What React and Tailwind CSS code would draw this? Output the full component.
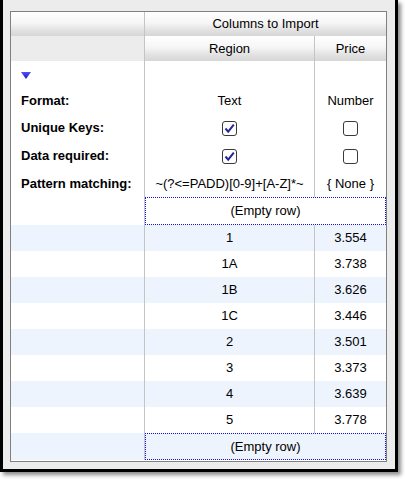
import React from "react";

const LINE = "border-[#c4c4c4]";
const HEAD_BG = "bg-[linear-gradient(to_bottom,#ffffff_0%,#f6f6f6_45%,#e2e2e2_75%,#d6d6d6_100%)]";

const rows = [
  ["1", "3.554"],
  ["1A", "3.738"],
  ["1B", "3.626"],
  ["1C", "3.446"],
  ["2", "3.501"],
  ["3", "3.373"],
  ["4", "3.639"],
  ["5", "3.778"],
];

const Check = ({ on }) => (
  <span className="flex h-[15px] w-[15px] items-center justify-center rounded-[3px] border border-[#3a3a3a] bg-white">
    {on && (
      <svg width="11" height="11" viewBox="0 0 11 11">
        <path d="M1.5 5.5 L4.2 8.6 L9.8 1.6" fill="none" stroke="#24249c" strokeWidth="2" />
      </svg>
    )}
  </span>
);

const MetaRow = ({ h, label, region, price }) => (
  <div className={`grid grid-cols-[134px_170px_71px] ${h}`}>
    <div className={`flex items-center border-r ${LINE} pl-[10px] font-bold`}>{label}</div>
    <div className={`flex items-center justify-center border-r ${LINE}`}>{region}</div>
    <div className="flex items-center justify-center">{price}</div>
  </div>
);

const EmptyRow = ({ h, blue }) => (
  <div className={`grid grid-cols-[134px_241px] ${h} ${blue ? "bg-[#edf4fe]" : ""}`}>
    <div className={`border-r ${LINE}`}></div>
    <div className="flex items-center justify-center border border-dotted border-[#1010e0]">(Empty row)</div>
  </div>
);

export default function App() {
  return (
    <div className="h-[479px] w-[405px] bg-white text-[13px] text-black" style={{ fontFamily: '"Liberation Sans", Arial, sans-serif' }}>
      <div className="h-[472px] w-[398px] border-x-[3px] border-b-[3px] border-black bg-[#ececec] pl-[7px] pt-[11px] shadow-[3px_3px_4px_rgba(0,0,0,0.45)]">
        <div className="h-[451px] w-[377px] border border-[#808080] bg-white">
          {/* header */}
          <div className={`grid h-[24px] grid-cols-[134px_241px] ${HEAD_BG}`}>
            <div className={`border-r ${LINE}`}></div>
            <div className="flex items-center justify-center">Columns to Import</div>
          </div>
          <div className="grid h-[25px] grid-cols-[134px_170px_71px]">
            <div className={`border-r ${LINE} bg-[#ececec]`}></div>
            <div className={`flex items-center justify-center border-r ${LINE} ${HEAD_BG}`}>Region</div>
            <div className={`flex items-center justify-center ${HEAD_BG}`}>Price</div>
          </div>

          {/* settings */}
          <MetaRow
            h="h-[26px]"
            label={
              <svg width="10" height="7" viewBox="0 0 10 7" className="mt-[2px]">
                <defs>
                  <linearGradient id="tri" x1="0" y1="0" x2="0" y2="1">
                    <stop offset="0" stopColor="#5050ff" />
                    <stop offset="1" stopColor="#1a1aa8" />
                  </linearGradient>
                </defs>
                <path d="M0 0 H10 L5 7 Z" fill="url(#tri)" />
              </svg>
            }
          />
          <MetaRow h="h-[27px]" label="Format:" region="Text" price="Number" />
          <MetaRow h="h-[28px]" label="Unique Keys:" region={<Check on />} price={<Check />} />
          <MetaRow h="h-[28px]" label="Data required:" region={<Check on />} price={<Check />} />
          <MetaRow h="h-[27px]" label="Pattern matching:" region="~(?<=PADD)[0-9]+[A-Z]*~" price="{ None }" />
          <EmptyRow h="h-[28px]" />

          {/* data */}
          {rows.map(([region, price], i) => (
            <div key={region} className={`grid h-[26px] grid-cols-[134px_170px_71px] ${i % 2 === 0 ? "bg-[#edf4fe]" : ""}`}>
              <div className={`border-r ${LINE}`}></div>
              <div className={`flex items-center justify-center border-r ${LINE}`}>{region}</div>
              <div className="flex items-center justify-center">{price}</div>
            </div>
          ))}
          <EmptyRow h="h-[27px]" blue />
        </div>
      </div>
    </div>
  );
}
